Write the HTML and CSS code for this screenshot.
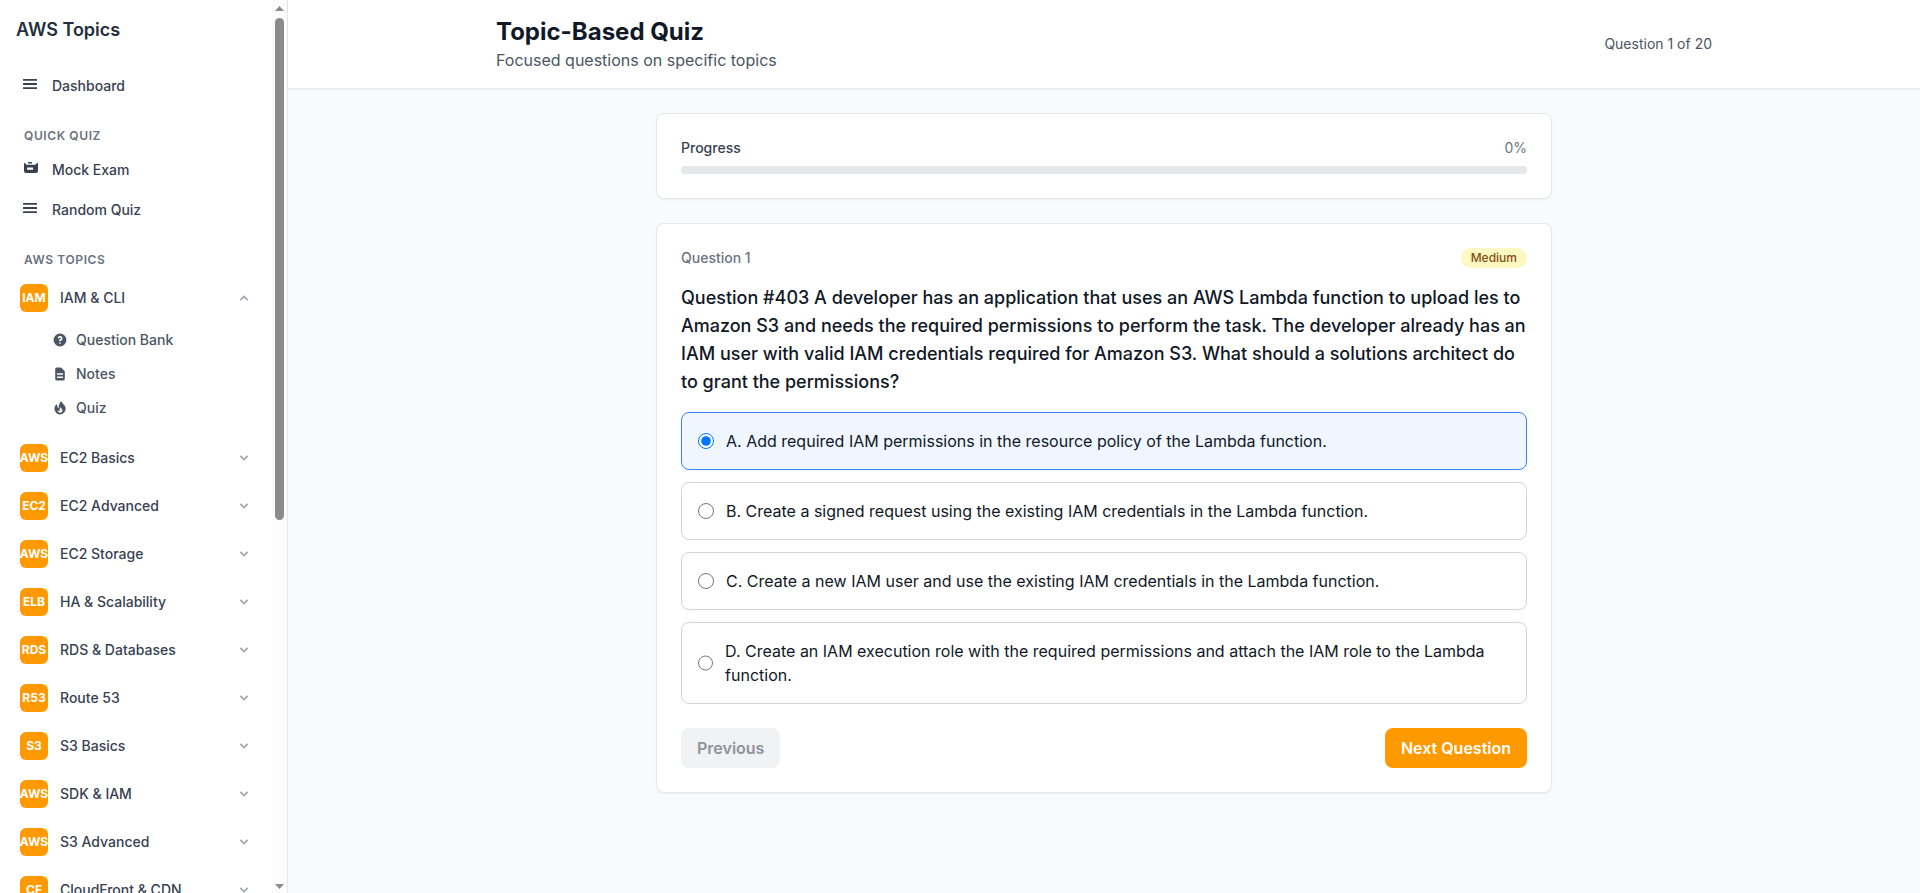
FILE: index.html
```html
<!DOCTYPE html>
<html lang="en">
<head>
<meta charset="utf-8">
<title>Topic-Based Quiz</title>
<link rel="stylesheet" href="styles.css">
</head>
<body>
<svg class="defs" width="0" height="0">
  <symbol id="menu" viewBox="0 0 14 10"><path d="M.4 0h13.200q.4 0 .4.4v1q0 .4-.4.4H.4Q0 1.800 0 1.400v-1Q0 0 .4 0zM.4 4.100h13.200q.4 0 .4.4v1q0 .4-.4.4H.4q-.4 0-.4-.4v-1q0-.4.4-.4zM.4 8.200h13.200q.4 0 .4.4v1q0 .4-.4.4H.4q-.4 0-.4-.4v-1q0-.4.4-.4z"/></symbol>
  <symbol id="exam" viewBox="0 0 14 11"><path fill-rule="evenodd" d="M0 1.600Q.2 1 .8 1q.8 0 1 1 .2.700 1 .700h8.400q.8 0 1-.7.200-1 1-1 .6 0 .8.600V9a2 2 0 0 1-2 2H2a2 2 0 0 1-2-2zM3 5.500v2.300h6V5.500zM4.300 0h3.400q.3 0 .3.300v1.300H4V.300q0-.3.300-.3z"/></symbol>
  <symbol id="question" viewBox="0 0 20 20"><path fill-rule="evenodd" d="M18 10a8 8 0 1 1-16 0 8 8 0 0 1 16 0zm-8-3a1 1 0 0 0-.867.5 1 1 0 1 1-1.731-1A3 3 0 0 1 13 8a3.001 3.001 0 0 1-2 2.830V11a1 1 0 1 1-2 0v-1a1 1 0 0 1 1-1 1 1 0 1 0 0-2zm0 8a1 1 0 1 0 0-2 1 1 0 0 0 0 2z"/></symbol>
  <symbol id="doc" viewBox="0 0 20 20"><path fill-rule="evenodd" d="M4 4a2 2 0 0 1 2-2h4.586A2 2 0 0 1 12 2.586L15.414 6A2 2 0 0 1 16 7.414V16a2 2 0 0 1-2 2H6a2 2 0 0 1-2-2V4zm2 6a1 1 0 0 1 1-1h6a1 1 0 1 1 0 2H7a1 1 0 0 1-1-1zm1 3a1 1 0 1 0 0 2h6a1 1 0 1 0 0-2H7z"/></symbol>
  <symbol id="fire" viewBox="0 0 20 20"><path fill-rule="evenodd" d="M12.395 2.553a1 1 0 0 0-1.450-.385c-.345.230-.614.558-.822.880-.214.330-.403.713-.570 1.116-.334.804-.614 1.768-.840 2.734a31.365 31.365 0 0 0-.613 3.580 2.640 2.640 0 0 1-.945-1.067c-.328-.680-.398-1.534-.398-2.654A1 1 0 0 0 5.050 6.050 6.981 6.981 0 0 0 3 11a7 7 0 1 0 11.950-4.950c-.592-.591-.980-.985-1.348-1.467-.363-.476-.724-1.063-1.207-2.030zM12.120 15.120A3 3 0 0 1 7 13s.879.500 2.500.500c0-1 .500-4 1.250-4.500.500 1 .786 1.293 1.371 1.879A2.990 2.990 0 0 1 13 13a2.990 2.990 0 0 1-.879 2.121z"/></symbol>
  <symbol id="down" viewBox="0 0 20 20"><path fill-rule="evenodd" d="M5.293 7.293a1 1 0 0 1 1.414 0L10 10.586l3.293-3.293a1 1 0 1 1 1.414 1.414l-4 4a1 1 0 0 1-1.414 0l-4-4a1 1 0 0 1 0-1.414z"/></symbol>
</svg>
<div class="app">
  <aside class="sidebar">
    <nav class="nav">
      <h2 class="nav-title">AWS Topics</h2>
      <a class="link"><svg class="menu-icon"><use href="#menu"/></svg>Dashboard</a>
      <h3 class="section">Quick Quiz</h3>
      <a class="link"><svg class="exam-icon"><use href="#exam"/></svg>Mock Exam</a>
      <a class="link link-next"><svg class="menu-icon"><use href="#menu"/></svg>Random Quiz</a>
      <h3 class="section">AWS Topics</h3>
      <div class="topic"><span class="badge">IAM</span><span class="topic-name">IAM &amp; CLI</span><svg class="chevron open"><use href="#down"/></svg></div>
      <div class="subnav">
        <a class="sub"><svg class="sub-icon"><use href="#question"/></svg>Question Bank</a>
        <a class="sub"><svg class="sub-icon"><use href="#doc"/></svg>Notes</a>
        <a class="sub"><svg class="sub-icon"><use href="#fire"/></svg>Quiz</a>
      </div>
      <div class="topic"><span class="badge">AWS</span><span class="topic-name">EC2 Basics</span><svg class="chevron"><use href="#down"/></svg></div>
      <div class="topic"><span class="badge">EC2</span><span class="topic-name">EC2 Advanced</span><svg class="chevron"><use href="#down"/></svg></div>
      <div class="topic"><span class="badge">AWS</span><span class="topic-name">EC2 Storage</span><svg class="chevron"><use href="#down"/></svg></div>
      <div class="topic"><span class="badge">ELB</span><span class="topic-name">HA &amp; Scalability</span><svg class="chevron"><use href="#down"/></svg></div>
      <div class="topic"><span class="badge">RDS</span><span class="topic-name">RDS &amp; Databases</span><svg class="chevron"><use href="#down"/></svg></div>
      <div class="topic"><span class="badge">R53</span><span class="topic-name">Route 53</span><svg class="chevron"><use href="#down"/></svg></div>
      <div class="topic"><span class="badge">S3</span><span class="topic-name">S3 Basics</span><svg class="chevron"><use href="#down"/></svg></div>
      <div class="topic"><span class="badge">AWS</span><span class="topic-name">SDK &amp; IAM</span><svg class="chevron"><use href="#down"/></svg></div>
      <div class="topic"><span class="badge">AWS</span><span class="topic-name">S3 Advanced</span><svg class="chevron"><use href="#down"/></svg></div>
      <div class="topic"><span class="badge">CF</span><span class="topic-name">CloudFront &amp; CDN</span><svg class="chevron"><use href="#down"/></svg></div>
    </nav>
    <div class="scrollbar">
      <svg class="arrow" viewBox="0 0 9 5"><path d="M0 5 4.500 0 9 5z"/></svg>
      <div class="thumb"></div>
      <svg class="arrow arrow-down" viewBox="0 0 9 5"><path d="M0 0h9L4.500 5z"/></svg>
    </div>
  </aside>
  <main class="main">
    <header class="header">
      <div class="header-inner">
        <div>
          <h1 class="title">Topic-Based Quiz</h1>
          <p class="subtitle">Focused questions on specific topics</p>
        </div>
        <span class="counter">Question 1 of 20</span>
      </div>
    </header>
    <div class="content">
      <section class="card">
        <div class="row progress-row"><span class="progress-label">Progress</span><span class="muted">0%</span></div>
        <div class="track"></div>
      </section>
      <section class="card">
        <div class="row question-row"><span class="muted question-number">Question 1</span><span class="pill">Medium</span></div>
        <h2 class="question">Question #403 A developer has an application that uses an AWS Lambda function to upload les to Amazon S3 and needs the required permissions to perform the task. The developer already has an IAM user with valid IAM credentials required for Amazon S3. What should a solutions architect do to grant the permissions?</h2>
        <div class="options">
          <label class="option selected"><input class="radio" type="radio" name="answer" checked><span>A. Add required IAM permissions in the resource policy of the Lambda function.</span></label>
          <label class="option"><input class="radio" type="radio" name="answer"><span>B. Create a signed request using the existing IAM credentials in the Lambda function.</span></label>
          <label class="option"><input class="radio" type="radio" name="answer"><span>C. Create a new IAM user and use the existing IAM credentials in the Lambda function.</span></label>
          <label class="option"><input class="radio" type="radio" name="answer"><span>D. Create an IAM execution role with the required permissions and attach the IAM role to the Lambda function.</span></label>
        </div>
        <div class="row">
          <button class="btn btn-prev">Previous</button>
          <button class="btn btn-next">Next Question</button>
        </div>
      </section>
    </div>
  </main>
</div>
</body>
</html>
```

FILE: styles.css
```css
* { box-sizing: border-box; margin: 0; padding: 0; }
body { font-family: Inter, "Liberation Sans", sans-serif; font-size: 16px; line-height: 24px; color: #111827; background: #f9fafb; overflow: hidden; }
.defs { position: absolute; }
svg { fill: currentColor; flex-shrink: 0; display: block; }
.app { display: flex; height: 893px; overflow: hidden; }

.sidebar { width: 288px; flex-shrink: 0; display: flex; background: #fff; border-right: 1px solid #e5e7eb; overflow: hidden; }
.nav { width: 272px; padding: 16px 16px 0; overflow: hidden; }
.nav-title { font-size: 18px; line-height: 28px; font-weight: 600; color: #232f3e; margin-bottom: 24px; }
.link { display: flex; align-items: center; height: 36px; padding-left: 4px; font-size: 14px; line-height: 20px; font-weight: 500; color: #374151; }
.link-next { margin-top: 4px; }
.menu-icon { width: 14px; height: 10px; margin: 0 15px 4px 3px; }
.exam-icon { width: 14px; height: 11px; margin: 0 14px 5px 4px; }
.section { padding-left: 8px; margin-top: 24px; margin-bottom: 8px; font-size: 12px; line-height: 16px; font-weight: 600; letter-spacing: .6px; color: #6b7280; text-transform: uppercase; }
.topic { display: flex; align-items: center; height: 44px; margin-bottom: 4px; padding: 0 4px; }
.badge { display: flex; align-items: center; justify-content: center; width: 28px; height: 28px; margin-right: 12px; flex-shrink: 0; border-radius: 6px; background: #f90; color: #fff; font-size: 12px; line-height: 16px; font-weight: 700; }
.topic-name { flex: 1; font-size: 14px; line-height: 20px; font-weight: 500; color: #374151; white-space: nowrap; }
.chevron { width: 16px; height: 16px; color: #9ca3af; }
.open { transform: rotate(180deg); }
.subnav { display: flex; flex-direction: column; gap: 2px; padding: 0 0 12px 36px; }
.sub { display: flex; align-items: center; height: 32px; font-size: 14px; line-height: 20px; font-weight: 500; color: #4b5563; }
.sub-icon { width: 16px; height: 16px; margin-right: 8px; }

.scrollbar { width: 15px; background: #fcfcfc; display: flex; flex-direction: column; align-items: center; padding: 6px 0 4px; }
.arrow { width: 9px; height: 5px; color: #8b8b8b; }
.thumb { width: 9px; height: 502px; margin-top: 7px; border-radius: 5px; background: #8b8b8b; }
.arrow-down { margin-top: auto; }

.main { flex: 1; background: #f9fafb; }
.header { background: #fff; border-bottom: 1px solid #e5e7eb; box-shadow: 0 1px 2px rgba(0,0,0,.05); }
.header-inner { display: flex; align-items: center; justify-content: space-between; width: 1280px; margin: 0 auto; padding: 16px 32px; }
.title { font-size: 24px; line-height: 32px; font-weight: 700; color: #111827; }
.subtitle { color: #4b5563; }
.counter { font-size: 14px; line-height: 20px; color: #4b5563; }
.content { width: 896px; margin: 0 auto; padding-top: 24px; display: flex; flex-direction: column; gap: 24px; }
.card { padding: 24px; background: #fff; border: 1px solid #e5e7eb; border-radius: 8px; box-shadow: 0 1px 2px rgba(0,0,0,.05); }
.row { display: flex; align-items: center; justify-content: space-between; }
.progress-row { margin-bottom: 8px; font-size: 14px; line-height: 20px; }
.progress-label { font-weight: 500; color: #374151; }
.muted { font-size: 14px; line-height: 20px; color: #6b7280; }
.question-number { font-weight: 500; }
.track { height: 8px; border-radius: 4px; background: #e5e7eb; }
.question-row { margin-bottom: 16px; }
.pill { padding: 2px 10px; border-radius: 10px; background: #fef9c3; color: #854d0e; font-size: 12px; line-height: 16px; font-weight: 500; }
.question { font-size: 18px; line-height: 28px; font-weight: 500; color: #111827; margin-bottom: 16px; }
.options { display: flex; flex-direction: column; gap: 12px; margin-bottom: 24px; }
.option { display: flex; align-items: center; padding: 16px; border: 1px solid #d1d5db; border-radius: 8px; }
.selected { border-color: #3b82f6; background: #eff6ff; }
.radio { width: 16px; height: 16px; margin-right: 12px; }
.btn { height: 40px; padding: 8px 16px; border: 0; border-radius: 8px; font: 600 16px/24px Inter, "Liberation Sans", sans-serif; }
.btn-prev { background: #f1f2f4; color: #8f939d; }
.btn-next { background: #f90; color: #fff; }
```
